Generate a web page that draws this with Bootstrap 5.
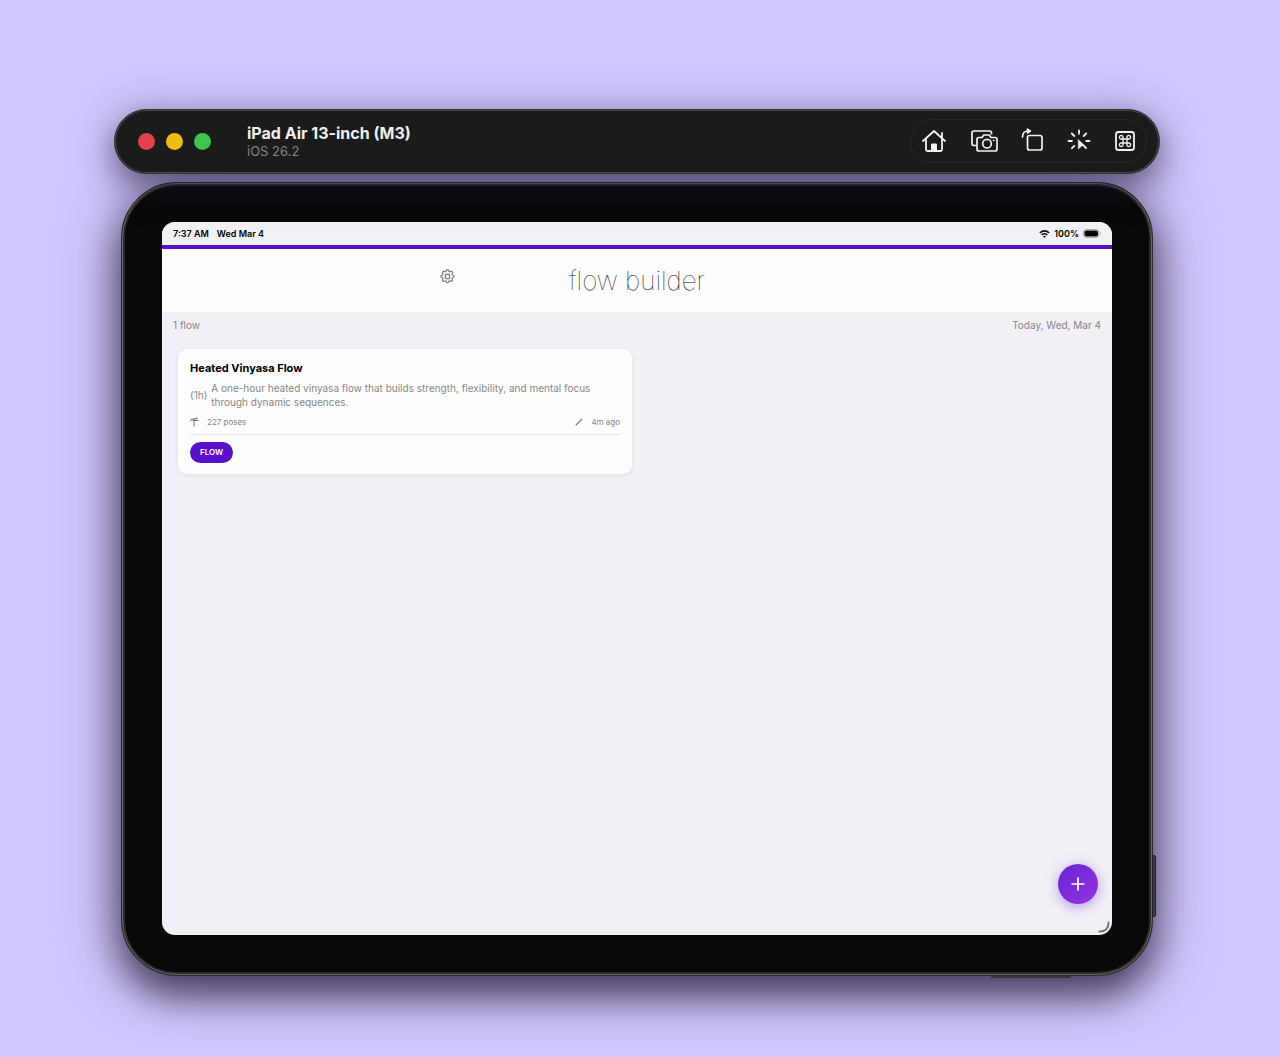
<!DOCTYPE html>
<html lang="en">
<head>
<meta charset="utf-8">
<meta name="viewport" content="width=device-width, initial-scale=1">
<title>flow builder</title>
<link href="https://cdn.jsdelivr.net/npm/bootstrap@5.3.0/dist/css/bootstrap.min.css" rel="stylesheet">
<style>
  body { font-family: Inter, "Liberation Sans", sans-serif; background: #d2c7fc; color: #000; font-size: 10px; line-height: 14px; }
  .desk { padding: 109px 120px 81px 114px; overflow: hidden; }
  .sim-bar { height: 65px; border-radius: 33px; background: #1b1b1b; border: 1px solid #303030; box-shadow: inset 0 0 0 1px #4a4a4c, 0 12px 30px rgba(30, 20, 50, .5), 0 4px 50px rgba(40, 25, 70, .25); padding: 0 12px 1px 23px; z-index: 1; }
  .lights { gap: 11px; }
  .light { width: 17px; height: 17px; border-radius: 50%; padding: 0; border: 0; }
  .light-close { background: #e0424f; }
  .light-min { background: #f0bd17; }
  .light-zoom { background: #3cc550; }
  .sim-name { font-size: 16px; line-height: 20px; font-weight: 700; color: #f0f0f0; }
  .sim-os { font-size: 13px; line-height: 16px; color: #858585; }
  .sim-info { margin-left: 36px; padding-bottom: 1px; }
  .sim-tools { height: 44px; width: 237px; border: 1px solid #282828; border-radius: 22px; padding: 0 8px; }
  .tool-btn { color: #f2f2f2; background: none; border: 0; padding: 0; line-height: 0; }
  .device { margin: 8px 7px 0; padding: 36px 37px 37px; border-radius: 56px; background: #090909; border: 4px solid #2b2b2b; box-shadow: 0 20px 36px rgba(20, 10, 35, .6), 0 6px 60px rgba(40, 25, 70, .5); }
  .device::before { content: ""; position: absolute; inset: -3px; border: 1px solid #686868; border-radius: 55px; pointer-events: none; }
  .side-key { position: absolute; right: -7px; bottom: 55px; width: 4px; height: 62px; background: #3d3b3c; border: 1px solid #222; border-radius: 0 2px 2px 0; }
  .foot-key { position: absolute; right: 78px; bottom: -6px; width: 80px; height: 2px; background: #353438; border-radius: 2px; }
  .screen { background: #f2f0f6; border-radius: 13px; overflow: hidden; }
  .status { height: 23px; padding: 0 11px; font-size: 9px; font-weight: 600; background: #f2f1f6; }
  .app-head { border-top: 4px solid #5810c8; background: #fdfdfd; height: 67px; }
  .head-grid { display: grid; grid-template-columns: 1fr auto 1fr; max-width: 394px; }
  .gear-btn { color: #777; border: 0; background: none; padding: 0; line-height: 0; margin-bottom: 8px; }
  .app-title { font-size: 26px; line-height: 32px; font-weight: 100; color: #111; }
  .soft { color: #858589; }
  .sub-row { padding: 6px 11px 1px; }
  .flow-list { padding: 16px 16px 0; }
  .flow-list .row { --bs-gutter-x: 10px; }
  .flow-card { border: 0; border-radius: 9px; background: #fdfdfd; padding: 11px 12px; box-shadow: 0 1px 4px rgba(0, 0, 0, .08); }
  .flow-name { font-size: 11px; line-height: 16px; font-weight: 700; margin-bottom: 5px; }
  .flow-desc { gap: 4px; }
  .flow-meta { font-size: 8px; line-height: 12px; padding: 7px 0 6px; border-bottom: 1px solid #e4e4e6; }
  .flow-tag { align-self: flex-start; margin-top: 7px; border: 0; border-radius: 11px; background: #5810c8; color: #fff; font-size: 8px; line-height: 21px; font-weight: 600; padding: 0 10px; }
  .add-btn { position: absolute; right: 14px; bottom: 31px; width: 40px; height: 40px; border: 0; border-radius: 50%; padding: 0; color: #fff; background: linear-gradient(135deg, #6823d4, #9436df); box-shadow: 0 3px 12px rgba(110, 50, 220, .36), 0 0 18px rgba(110, 50, 220, .1); line-height: 0; }
  .corner { position: absolute; right: 2px; bottom: 2px; }
</style>
</head>
<body>
<div class="desk d-flex flex-column min-vh-100">
  <header class="sim-bar d-flex align-items-center position-relative">
    <div class="lights d-flex">
      <button class="light light-close" aria-label="Close"></button>
      <button class="light light-min" aria-label="Minimize"></button>
      <button class="light light-zoom" aria-label="Zoom"></button>
    </div>
    <div class="sim-info">
      <div class="sim-name">iPad Air 13-inch (M3)</div>
      <div class="sim-os">iOS 26.2</div>
    </div>
    <div class="sim-tools ms-auto d-flex align-items-center justify-content-between">
      <button class="tool-btn" aria-label="Home"><svg width="30" height="26" viewBox="0 0 30 26" fill="none" stroke="currentColor" stroke-width="1.8" stroke-linecap="round" stroke-linejoin="round"><path d="M4 13 15 3l11 10M7 11v10.500Q7 23 8.500 23h13Q23 23 23 21.500V11M23 9.500V5"/><path d="M12.500 23v-7h5v7z" fill="currentColor" stroke-width="1"/></svg></button>
      <button class="tool-btn" aria-label="Screenshot"><svg width="30" height="26" viewBox="0 0 30 26" fill="none" stroke="currentColor" stroke-width="1.7" stroke-linejoin="round"><path d="M7.500 17.500H5q-2 0-2-2V5q0-2 2-2h15.500q2 0 2 2v1.500"/><path d="M10 9.500h3l1.800-2.500h5.400L22 9.500h4q2 0 2 2v9.500q0 2-2 2H10q-2 0-2-2v-9.500q0-2 2-2z"/><circle cx="18" cy="15.700" r="4.300"/><circle cx="24.800" cy="12.500" r=".6" fill="currentColor" stroke-width=".7"/></svg></button>
      <button class="tool-btn" aria-label="Rotate"><svg width="26" height="26" viewBox="0 0 26 26" fill="none" stroke="currentColor" stroke-width="1.7" stroke-linecap="round" stroke-linejoin="round"><rect x="7.500" y="7.500" width="14.500" height="14.500" rx="2"/><path d="M2.500 9C2.500 5 4.500 3 8 3"/><path d="M7.500.8 11 3 7.500 5.400z" fill="currentColor" stroke-width="1"/></svg></button>
      <button class="tool-btn" aria-label="Show touches"><svg width="26" height="26" viewBox="2 0 26 26" fill="none" stroke="currentColor" stroke-width="1.8" stroke-linecap="round"><path d="M15 2.500v3.300M7.800 5.500l2.500 2.500M22.200 5.500 19.700 8M4.500 13h3.400M22.300 13h3.300M7.800 20.300l2.500-2.500M20.500 18.500l1.500 1.500"/><path d="m14.500 12 6.300 5.800-3.300.2-2.800 2.600z" fill="currentColor" stroke-width=".8" stroke-linejoin="round"/></svg></button>
      <button class="tool-btn" aria-label="Keyboard shortcuts"><svg width="26" height="26" viewBox="0 0 26 26" fill="none" stroke="currentColor"><rect x="4" y="4" width="18" height="18" rx="2.500" stroke-width="1.800"/><path stroke-width="1.300" d="M11 11H9.300A1.800 1.800 0 1 1 11 9.300v7.400A1.800 1.800 0 1 1 9.300 15h7.400a1.800 1.800 0 1 1-1.700 1.700V9.300a1.800 1.800 0 1 1 1.700 1.700z"/></svg></button>
    </div>
  </header>

  <main class="device position-relative d-flex flex-column flex-grow-1">
    <span class="side-key"></span><span class="foot-key"></span>
    <div class="screen position-relative flex-grow-1">
      <div class="status d-flex align-items-center justify-content-between">
        <div class="d-flex gap-2"><span>7:37 AM</span><span>Wed Mar 4</span></div>
        <div class="d-flex align-items-center gap-1">
          <svg width="11" height="8" viewBox="0 0 11 8" fill="none" stroke="#111" stroke-width="1.500"><path d="M.8 2.900Q5.500-1.100 10.200 2.900M2.600 4.900q2.900-2.300 5.800 0"/><path d="M4 6.300q1.500-1 3 0L5.500 8z" fill="#111" stroke="none"/></svg>
          <span>100%</span>
          <svg width="18" height="9" viewBox="0 0 18 9"><rect x=".5" y=".5" width="15.500" height="8" rx="2.700" fill="none" stroke="#aaa"/><rect x="1.500" y="1.500" width="13.500" height="6" rx="1.800" fill="#080808"/><path d="M17 3q1.500 1.500 0 3z" fill="#aaa"/></svg>
        </div>
      </div>
      <div class="app-head d-flex justify-content-center">
        <div class="head-grid w-100 align-items-center">
          <div><button class="gear-btn" aria-label="Settings"><svg width="16" height="16" viewBox="0 0 16 16" fill="none" stroke="currentColor" stroke-width="1.100" stroke-linejoin="round"><path d="M6.100 2.500 6.600.9h1.800l.5 1.600 1 .4 1.500-.8 1.300 1.300-.8 1.500.4 1 1.600.5v1.800l-1.600.5-.4 1 .8 1.500-1.300 1.300-1.500-.8-1 .4-.5 1.600H6.600l-.5-1.600-1-.4-1.500.8-1.300-1.300.8-1.500-.4-1-1.600-.5V6.400l1.600-.5.4-1-.8-1.500 1.300-1.300 1.500.8z"/><circle cx="7.500" cy="7.400" r="2.300"/></svg></button></div>
          <h1 class="app-title mb-0">flow builder</h1>
          <span></span>
        </div>
      </div>
      <div class="sub-row soft d-flex justify-content-between"><span>1 flow</span><span>Today, Wed, Mar 4</span></div>
      <div class="flow-list">
        <div class="row">
          <div class="col-6">
            <article class="card flow-card">
              <h2 class="flow-name">Heated Vinyasa Flow</h2>
              <div class="flow-desc soft d-flex align-items-center">
                <span>(1h)</span>
                <p class="mb-0">A one-hour heated vinyasa flow that builds strength, flexibility, and mental focus through dynamic sequences.</p>
              </div>
              <div class="flow-meta soft d-flex justify-content-between">
                <span class="d-flex align-items-center gap-2"><svg width="9" height="10" viewBox="0 0 9 10" fill="none" stroke="#666" stroke-width=".9" stroke-linecap="round"><path d="M.7 4Q.8 2 2.500 2.200L7.500 1.500M1.500 2.200l2 1.400 4.800-.1M4 3.500v5.500M4 3l2-2"/></svg><span>227 poses</span></span>
                <span class="d-flex align-items-center gap-2"><svg width="8" height="8" viewBox="0 0 8 8" stroke="#666" stroke-width="1.100"><path d="M.7 7.300 7.200.8"/></svg><span>4m ago</span></span>
              </div>
              <button class="flow-tag">FLOW</button>
            </article>
          </div>
        </div>
      </div>
      <button class="add-btn" aria-label="Add flow"><svg width="14" height="14" viewBox="0 0 14 14" stroke="currentColor" stroke-width="1.700" stroke-linecap="round"><path d="M7 1.200v11.600M1.200 7h11.600"/></svg></button>
      <svg class="corner" width="12" height="12" viewBox="0 0 12 12" fill="none" stroke="#77757a" stroke-width="2" stroke-linecap="round"><path d="M10.500 1.500q0 9-9 9"/></svg>
    </div>
  </main>
</div>
<script src="https://cdn.jsdelivr.net/npm/bootstrap@5.3.0/dist/js/bootstrap.bundle.min.js"></script>
</body>
</html>
